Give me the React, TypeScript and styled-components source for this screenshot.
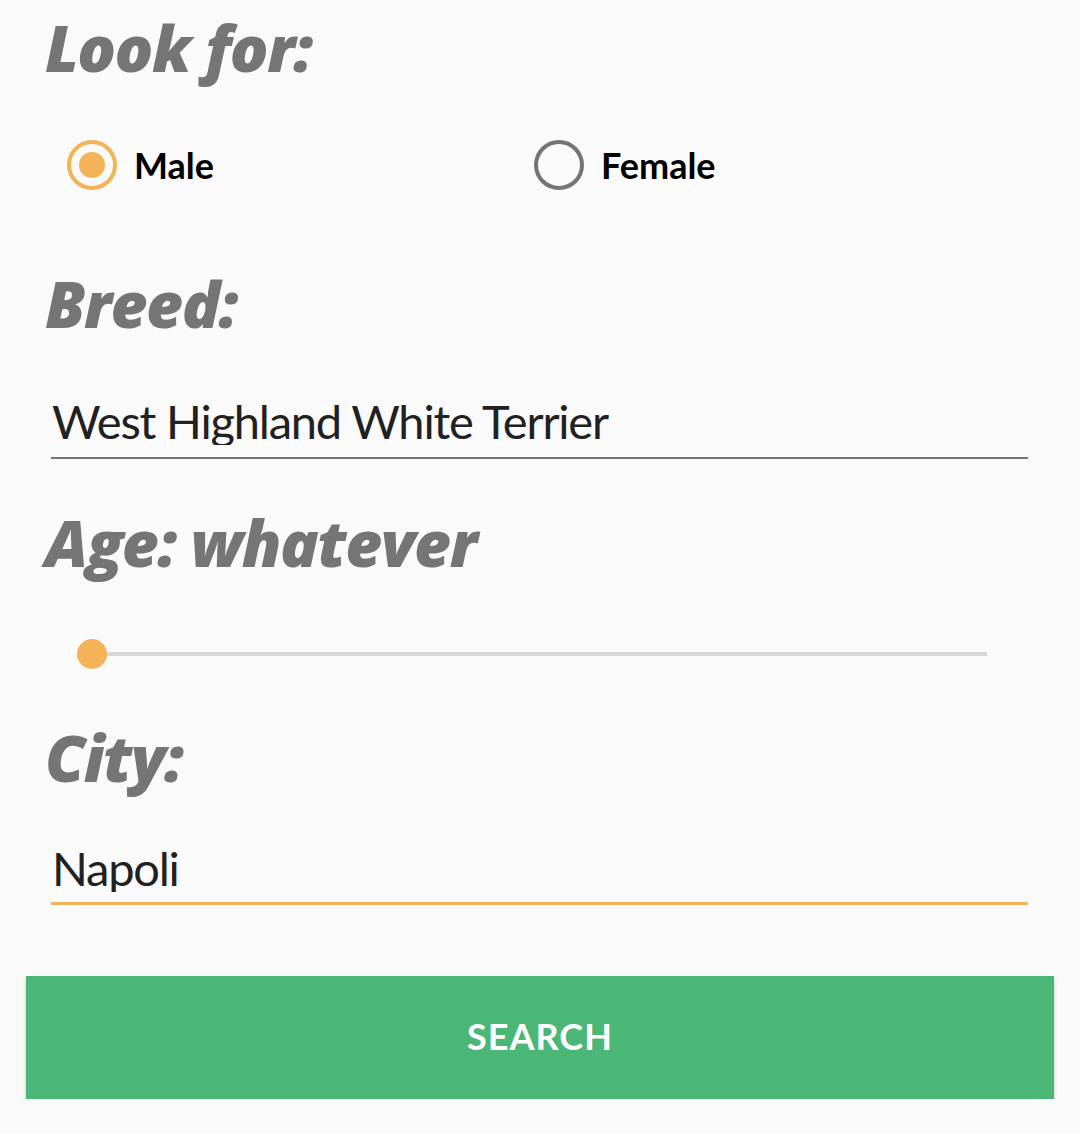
import React from "react";
import styled, { createGlobalStyle } from "styled-components";

const Global = createGlobalStyle`
  html, body { margin: 0; padding: 0; background: #fafafa; }
  body { font-family: Lato, "Open Sans", sans-serif; }
`;

const Page = styled.div`
  display: flex;
  flex-direction: column;
  padding: 0 26px;
  width: 1080px;
  box-sizing: border-box;
`;

const Heading = styled.h2<{ $top: number }>`
  margin: ${(p) => p.$top}px 0 0 19px;
  font-family: "Open Sans", sans-serif;
  font-weight: 800;
  font-style: italic;
  font-size: 64px;
  line-height: 1;
  color: #757575;
  letter-spacing: -1.5px;
`;

const RadioRow = styled.div`
  display: grid;
  grid-template-columns: 467px 1fr;
  margin: 60px 0 0 41px;
  height: 50px;
`;

const RadioOption = styled.label`
  display: flex;
  align-items: center;
  gap: 17px;
  font-family: Lato, sans-serif;
  font-weight: 700;
  font-size: 36px;
  color: #000;
`;

const RadioCircle = styled.span<{ $checked?: boolean }>`
  width: 50px;
  height: 50px;
  box-sizing: border-box;
  border-radius: 50%;
  border: 4px solid ${(p) => (p.$checked ? "#f3b356" : "#757575")};
  display: flex;
  align-items: center;
  justify-content: center;
  &::after {
    content: "";
    width: 26px;
    height: 26px;
    border-radius: 50%;
    background: ${(p) => (p.$checked ? "#f3b356" : "transparent")};
  }
`;

const TextInput = styled.input<{ $top: number; $focused?: boolean }>`
  display: block;
  margin: ${(p) => p.$top}px 26px 0 25px;
  padding: 0 0 ${(p) => (p.$focused ? 10 : 12)}px 1px;
  border: none;
  border-bottom: ${(p) => (p.$focused ? "3px solid #f3b356" : "2px solid #757575")};
  background: transparent;
  font-family: Lato, sans-serif;
  font-size: 47px;
  line-height: 48px;
  letter-spacing: -1.2px;
  color: #212121;
  outline: none;
`;

const Slider = styled.div`
  position: relative;
  margin: 64px 0 0 51px;
  width: 925px;
  height: 30px;
`;

const Track = styled.div`
  position: absolute;
  left: 15px;
  right: 15px;
  top: 13px;
  height: 4px;
  background: #d7d7d7;
`;

const Thumb = styled.div`
  position: absolute;
  left: 0;
  top: 0;
  width: 30px;
  height: 30px;
  border-radius: 50%;
  background: #f3b356;
`;

const SearchButton = styled.button`
  margin-top: 71px;
  height: 123px;
  width: 100%;
  border: none;
  background: #4bb776;
  color: #fff;
  font-family: Lato, sans-serif;
  font-weight: 700;
  font-size: 36px;
  letter-spacing: 1px;
  padding: 0 0 4px;
  box-shadow: 0 3px 4px rgba(0, 0, 0, 0.2);
`;

export default function App() {
  return (
    <>
      <Global />
      <Page>
        <Heading $top={16}>Look for:</Heading>
        <RadioRow>
          <RadioOption>
            <RadioCircle $checked />
            Male
          </RadioOption>
          <RadioOption>
            <RadioCircle />
            Female
          </RadioOption>
        </RadioRow>
        <Heading $top={82}>Breed:</Heading>
        <TextInput $top={61} readOnly value="West Highland White Terrier" />
        <Heading $top={52}>Age: whatever</Heading>
        <Slider>
          <Track />
          <Thumb />
        </Slider>
        <Heading $top={57}>City:</Heading>
        <TextInput $top={54} $focused readOnly value="Napoli" />
        <SearchButton>SEARCH</SearchButton>
      </Page>
    </>
  );
}
